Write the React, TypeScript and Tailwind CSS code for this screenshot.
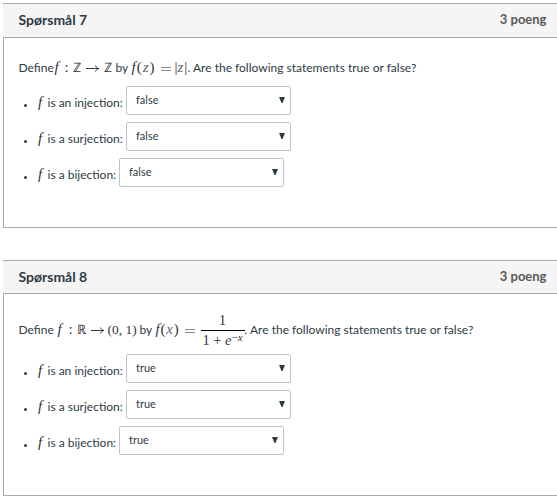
import type { ReactNode } from "react";

const serif = "font-['Liberation_Serif',serif] text-[#333]";

function Cell({ w, className = "", children }: { w: string; className?: string; children: ReactNode }) {
  return <span className={`shrink-0 whitespace-nowrap ${w} ${className}`}>{children}</span>;
}

function MathCell({ w, className = "text-[15px]", children }: { w: string; className?: string; children: ReactNode }) {
  return <span className={`shrink-0 whitespace-nowrap ${serif} ${w} ${className}`}>{children}</span>;
}

function Arrow() {
  return (
    <svg className="inline-block overflow-visible align-baseline" width="13" height="8" viewBox="0 0 13 8" fill="none" stroke="#222" strokeWidth="0.9">
      <path d="M0 4.5H12.5M9.5 1.5C10 3 11 4 12.7 4.5C11 5 10 6 9.5 7.5" />
    </svg>
  );
}

function Equals() {
  return (
    <svg className="inline-block overflow-visible align-baseline" width="10" height="7" viewBox="0 0 10 7" fill="none" stroke="#888" strokeWidth="1">
      <path d="M0 2.5H10M0 5.5H10" />
    </svg>
  );
}

function Row({ label, value, labelWidth }: { label: string; value: string; labelWidth: string }) {
  return (
    <li className="flex h-[29px]">
      <span className="mt-[18px] ml-5 h-[3px] w-[3px] shrink-0 rounded-full bg-[#2d3b45]" />
      <span className={`ml-[11px] flex h-[29px] items-baseline pt-[7px] leading-[18px] ${labelWidth}`}>
        <MathCell w="w-[9.5px]" className="text-[15px] leading-[18px] italic">f</MathCell>
        <span className="whitespace-nowrap">{label}</span>
      </span>
      <button className="flex h-[29px] w-[165px] shrink-0 items-start justify-between rounded-[2px] border border-[#c1c4c7] bg-white pt-[4px] pr-[5px] pl-[9px] text-[11px] leading-[17px]">
        <span>{value}</span>
        <svg className="mt-[6px]" width="6" height="6" viewBox="0 0 6 6">
          <path d="M0 0H6L3.5 6H2.5Z" fill="#2d3b45" />
        </svg>
      </button>
    </li>
  );
}

function Question({ n, headerHeight, height, value, children }: { n: number; headerHeight: string; height: string; value: string; children: ReactNode }) {
  return (
    <section className={`ml-[3px] flex flex-col border-t border-b border-[#aaa] ${height}`}>
      <header className={`flex shrink-0 items-center justify-between border-b border-[#aaa] bg-[#f5f5f5] pr-[10.5px] pl-[15.5px] font-bold ${headerHeight}`}>
        <h2 className="pb-[2px] text-[14px] text-[#2d3b45]">Spørsmål {n}</h2>
        <span className="pb-px text-[13px] text-[#595959]">3 poeng</span>
      </header>
      <div className="flex-1 border-l border-[#aaa]">
        {children}
        <ul className="flex flex-col gap-[7px]">
          <Row label="is an injection:" value={value} labelWidth="w-[88px]" />
          <Row label="is a surjection:" value={value} labelWidth="w-[88px]" />
          <Row label="is a bijection:" value={value} labelWidth="w-[81px]" />
        </ul>
      </div>
    </section>
  );
}

export default function App() {
  return (
    <main className="h-[497px] w-[557px] overflow-hidden bg-white pt-[3px] font-['Lato',sans-serif] text-[12px] text-[#2d3b45]">
      <Question n={7} headerHeight="h-[34px]" height="h-[225px]" value="false">
        <div className="flex h-[48px] items-baseline pt-5 pl-[14.5px] leading-[18px]">
          <Cell w="w-[36px]">Define</Cell>
          <MathCell w="w-[10px]" className="text-[15px] italic">f</MathCell>
          <MathCell w="w-[8px]">:</MathCell>
          <MathCell w="w-[13px]" className="text-[13px]">ℤ</MathCell>
          <MathCell w="w-[18px]"><Arrow /></MathCell>
          <MathCell w="w-[12px]" className="text-[13px]">ℤ</MathCell>
          <Cell w="w-[16px]">by</Cell>
          <MathCell w="w-[29px]" className="text-[15px] tracking-[1px]"><i>f</i>(<i className="text-[#666]">z</i>)</MathCell>
          <MathCell w="w-[14px]"><Equals /></MathCell>
          <MathCell w="w-[13px]" className="text-[15px]">|<i className="pr-px text-[#666]">z</i>|</MathCell>
          <Cell w="w-auto">. Are the following statements true or false?</Cell>
        </div>
      </Question>
      <div className="h-8" />
      <Question n={8} headerHeight="h-[33px]" height="h-[236px]" value="true">
        <div className="flex h-[60px] items-baseline pt-[26px] pl-[14.5px] leading-[18px]">
          <Cell w="w-[39px]">Define</Cell>
          <MathCell w="w-[11px]" className="text-[15px] italic">f</MathCell>
          <MathCell w="w-[8px]">:</MathCell>
          <MathCell w="w-[14px]" className="text-[13px]">ℝ</MathCell>
          <MathCell w="w-[17px]"><Arrow /></MathCell>
          <MathCell w="w-[32px]" className="text-[13.5px]">(0, 1)</MathCell>
          <Cell w="w-[16px]">by</Cell>
          <MathCell w="w-[29px]" className="text-[15px] tracking-[0.8px]"><i>f</i>(<i className="text-[#666]">x</i>)</MathCell>
          <MathCell w="w-[16px]"><Equals /></MathCell>
          <span className={`-mt-[8px] flex h-[34px] w-[44px] shrink-0 flex-col self-start text-center text-[14px] leading-[18px] ${serif}`}>
            <span className="h-[19px] shrink-0 border-b border-black">1</span>
            <span className="flex h-[18px] shrink-0 justify-center whitespace-pre text-[14.5px]">1 + <i>e</i><span className="-mt-[3px] text-[11px]">−<i>x</i></span></span>
          </span>
          <Cell w="w-auto">. Are the following statements true or false?</Cell>
        </div>
      </Question>
    </main>
  );
}
